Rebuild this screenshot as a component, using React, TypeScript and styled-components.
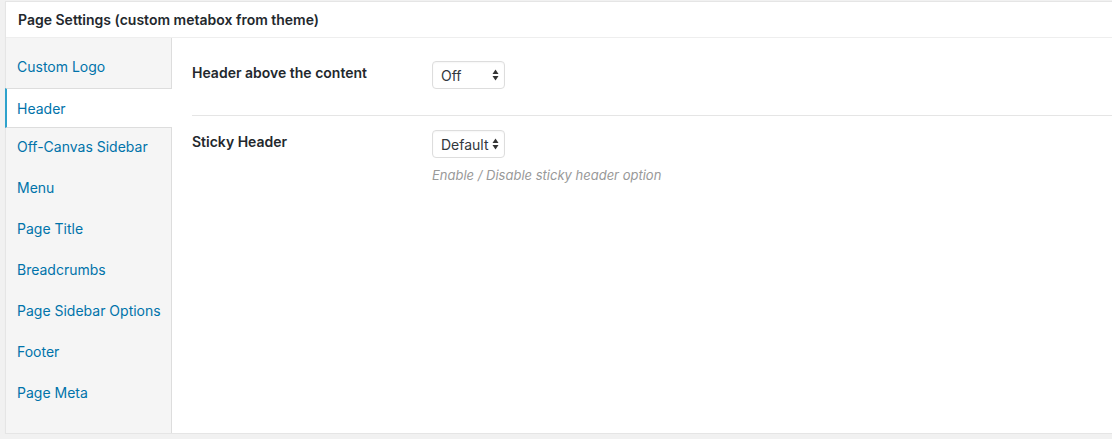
import React from "react";
import styled, { createGlobalStyle } from "styled-components";

const GlobalStyle = createGlobalStyle`
  body {
    margin: 0;
    background: #f1f1f1;
    font-family: Inter, "Noto Sans", sans-serif;
    color: #23282d;
  }
`;

const Postbox = styled.div`
  margin: 1px 0 0 5px;
  width: 1107px;
  height: 433px;
  box-sizing: border-box;
  background: #fff;
  border: 1px solid #e5e5e5;
  border-right: none;
  box-shadow: 0 1px 1px rgba(0, 0, 0, 0.04);
  display: flex;
  flex-direction: column;
`;

const Title = styled.h2`
  margin: 0;
  height: 35px;
  padding: 0 12px;
  display: flex;
  align-items: center;
  font-size: 14px;
  font-weight: 600;
  color: #23282d;
  border-bottom: 1px solid #eee;
`;

const Inside = styled.div`
  flex: 1;
  display: flex;
`;

const Tabs = styled.ul`
  list-style: none;
  margin: 0;
  padding: 9px 0 0;
  width: 166px;
  box-sizing: border-box;
  background: #f5f5f5;
  border-right: 1px solid #ddd;
`;

const Tab = styled.li<{ $active?: boolean }>`
  padding: 10px 11px 11px;
  line-height: 20px;
  font-size: 14px;
  white-space: nowrap;
  color: #0073aa;
  ${(p) =>
    p.$active
      ? `
    position: relative;
    background: #fff;
    margin: 0 -1px -1px -1px;
    border-left: 2px solid #2ea2cc;
    border-top: 1px solid #ddd;
    border-bottom: 1px solid #ddd;
    padding: 10px 11px 8px 10px;
  `
      : ""}
`;

const Panel = styled.div`
  flex: 1;
  padding: 9px 0 0 20px;
`;

const Row = styled.div<{ $divider?: boolean }>`
  display: flex;
  align-items: flex-start;
  padding: 14px 0;
  border-bottom: ${(p) => (p.$divider ? "1px solid #e5e5e5" : "none")};
`;

const Label = styled.div`
  width: 240px;
  flex-shrink: 0;
  margin-top: 2px;
  line-height: 20px;
  font-size: 14px;
  font-weight: 600;
  color: #23282d;
`;

const Field = styled.div`
  min-height: 40px;
`;

const SelectWrap = styled.div`
  position: relative;
  width: 73px;
  height: 28px;
`;

const Select = styled.select`
  appearance: none;
  width: 100%;
  height: 100%;
  box-sizing: border-box;
  margin: 0;
  padding: 0 0 0 8px;
  border: 1px solid #ddd;
  border-radius: 4px;
  background: #fff;
  box-shadow: inset 0 1px 2px rgba(0, 0, 0, 0.04);
  font-family: inherit;
  font-size: 14px;
  color: #32373c;
  outline: none;
`;

const Arrow = styled.svg`
  position: absolute;
  right: 6px;
  top: 8px;
  pointer-events: none;
`;

const Description = styled.p`
  margin: 9px 0 0;
  font-size: 13px;
  font-style: italic;
  color: #999;
`;

const tabs = [
  "Custom Logo",
  "Header",
  "Off-Canvas Sidebar",
  "Menu",
  "Page Title",
  "Breadcrumbs",
  "Page Sidebar Options",
  "Footer",
  "Page Meta",
];

const Dropdown = ({ value }: { value: string }) => (
  <SelectWrap>
    <Select defaultValue={value}>
      <option>{value}</option>
    </Select>
    <Arrow width="7" height="12" viewBox="0 0 7 12">
      <path d="M3.5 0.5 L6.5 5 L0.5 5 Z" fill="#333" />
      <path d="M3.5 11.5 L6.5 7 L0.5 7 Z" fill="#333" />
    </Arrow>
  </SelectWrap>
);

const App = (): JSX.Element => (
  <>
    <GlobalStyle />
    <Postbox>
      <Title>Page Settings (custom metabox from theme)</Title>
      <Inside>
        <Tabs>
          {tabs.map((t) => (
            <Tab key={t} $active={t === "Header"}>
              {t}
            </Tab>
          ))}
        </Tabs>
        <Panel>
          <Row $divider>
            <Label>Header above the content</Label>
            <Field>
              <Dropdown value="Off" />
            </Field>
          </Row>
          <Row>
            <Label>Sticky Header</Label>
            <Field>
              <Dropdown value="Default" />
              <Description>Enable / Disable sticky header option</Description>
            </Field>
          </Row>
        </Panel>
      </Inside>
    </Postbox>
  </>
);

export default App;
